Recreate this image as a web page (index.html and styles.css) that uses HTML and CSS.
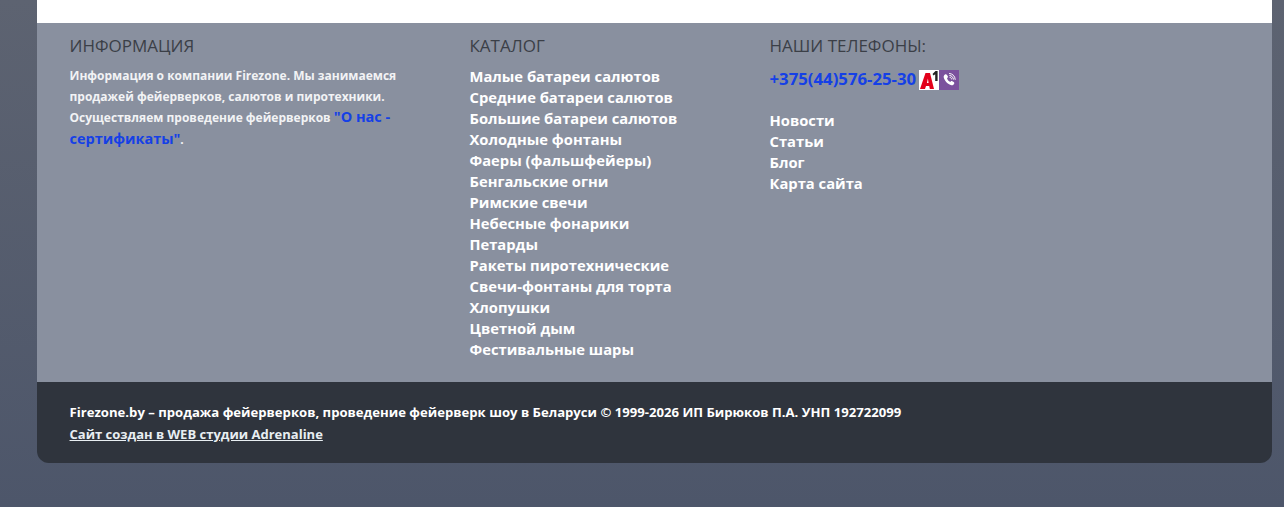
FILE: index.html
```html
<!DOCTYPE html>
<html lang="ru">
<head>
    <meta charset="UTF-8">
    <meta name="viewport" content="width=device-width, initial-scale=1.0">
    <title>Firezone.by</title>
    <link rel="stylesheet" href="styles.css">
</head>
<body>
    <div class="wrapper">
        <div class="content-end"></div>
        <div class="footer-top">
            <div class="col col-info">
                <h4>ИНФОРМАЦИЯ</h4>
                <p class="about">Информация о компании Firezone. Мы занимаемся продажей фейерверков, салютов и пиротехники. Осуществляем проведение фейерверков <a href="#">"О нас - сертификаты"</a>.</p>
            </div>
            <div class="col col-catalog">
                <h4>КАТАЛОГ</h4>
                <ul class="links">
                    <li><a href="#">Малые батареи салютов</a></li>
                    <li><a href="#">Средние батареи салютов</a></li>
                    <li><a href="#">Большие батареи салютов</a></li>
                    <li><a href="#">Холодные фонтаны</a></li>
                    <li><a href="#">Фаеры (фальшфейеры)</a></li>
                    <li><a href="#">Бенгальские огни</a></li>
                    <li><a href="#">Римские свечи</a></li>
                    <li><a href="#">Небесные фонарики</a></li>
                    <li><a href="#">Петарды</a></li>
                    <li><a href="#">Ракеты пиротехнические</a></li>
                    <li><a href="#">Свечи-фонтаны для торта</a></li>
                    <li><a href="#">Хлопушки</a></li>
                    <li><a href="#">Цветной дым</a></li>
                    <li><a href="#">Фестивальные шары</a></li>
                </ul>
            </div>
            <div class="col col-phones">
                <h4>НАШИ ТЕЛЕФОНЫ:</h4>
                <div class="phone">
                    <a href="#">+375(44)576-25-30</a>
                    <svg class="icon" viewBox="0 0 20 20">
                        <rect width="20" height="20" fill="#fff"/>
                        <path d="M1 19 L6.5 3 H11 L15 19 H10.8 L10.2 16 H7 L6 19 Z M7.9 13 H9.6 L8.9 8.6 Z" fill="#e2001a" fill-rule="evenodd"/>
                        <path d="M13.5 4 L16.5 1 H18.6 V11 H16.2 V4.2 L14.6 5.4 Z" fill="#222"/>
                    </svg>
                    <svg class="icon" viewBox="0 0 20 20">
                        <rect width="20" height="20" fill="#7b519d"/>
                        <path d="M6 4.5 C6.8 4 7.6 4.3 8 5 L8.8 6.3 C9.1 6.9 9 7.4 8.5 7.8 L8 8.2 C8.3 9.6 9.8 11.3 11.3 11.9 L11.9 11.3 C12.3 10.9 12.8 10.9 13.3 11.2 L14.7 12.1 C15.4 12.6 15.5 13.3 15 14 C14.4 14.9 13.5 15.5 12.5 15.3 C8.7 14.4 5.4 10.8 4.7 7.3 C4.5 6.1 5.1 5.1 6 4.5 Z" fill="#fff"/>
                        <path d="M10.5 3.5 C13.6 3.7 16 6 16.2 9.4 M10.8 5.5 C12.8 5.7 14.2 7.1 14.4 9.2 M11 7.4 C11.9 7.5 12.5 8.1 12.6 9" fill="none" stroke="#fff" stroke-width="1" stroke-linecap="round"/>
                    </svg>
                </div>
                <ul class="links links-extra">
                    <li><a href="#">Новости</a></li>
                    <li><a href="#">Статьи</a></li>
                    <li><a href="#">Блог</a></li>
                    <li><a href="#">Карта сайта</a></li>
                </ul>
            </div>
        </div>
        <div class="footer-bottom">
            <p>Firezone.by – продажа фейерверков, проведение фейерверк шоу в Беларуси © 1999-2026 ИП Бирюков П.А. УНП 192722099</p>
            <p><a href="#">Сайт создан в WEB студии Adrenaline</a></p>
        </div>
    </div>
</body>
</html>
```

FILE: styles.css
```css
body {
    margin: 0;
    height: 507px;
    overflow: hidden;
    background: linear-gradient(180deg, #5d6371 0%, #4d566a 100%);
    font-family: "Open Sans", "Noto Sans", sans-serif;
    color: #fff;
}
a {
    color: inherit;
    text-decoration: none;
}
ul {
    list-style: none;
    margin: 0;
    padding: 0;
}
h4 {
    margin: 0;
    font-size: 17px;
    font-weight: 400;
    line-height: 20px;
    color: #3b3f47;
}
.wrapper {
    width: 1235px;
    margin-left: 37px;
}
.content-end {
    height: 23px;
    background-color: #fff;
}
.footer-top {
    display: flex;
    height: 346px;
    padding: 13px 0 0 32.5px;
    background-color: #89909f;
}
.col-info {
    width: 400px;
}
.col-catalog {
    width: 300px;
}
.about {
    width: 330px;
    margin: 10px 0 0;
    font-size: 12px;
    line-height: 20.5px;
    font-weight: 700;
    color: #f2f3f5;
}
.about a {
    font-size: 14.5px;
    color: #1540e6;
}
.links {
    margin-top: 10px;
    font-size: 14.75px;
    line-height: 21px;
    font-weight: 700;
}
.phone {
    display: flex;
    align-items: center;
    margin-top: 14px;
    height: 20px;
    font-size: 16.75px;
    font-weight: 700;
    color: #1540e6;
}
.phone a {
    margin: 0 3px 4px 0;
}
.icon {
    width: 20px;
    height: 20px;
}
.links-extra {
    margin-top: 20px;
}
.footer-bottom {
    height: 81px;
    box-sizing: border-box;
    padding: 19px 32.5px 0;
    background-color: #2f343d;
    border-radius: 0 0 12px 12px;
    font-size: 13.13px;
    line-height: 22px;
    font-weight: 700;
}
.footer-bottom p {
    margin: 0;
}
.footer-bottom a {
    font-size: 13px;
    color: #e8eef2;
    text-decoration: underline;
}
```
